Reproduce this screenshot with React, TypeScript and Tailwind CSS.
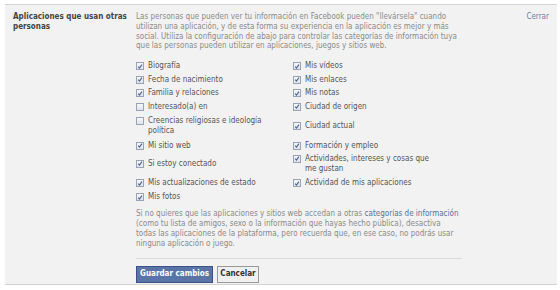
import React from 'react';

type Item = { label: string; checked: boolean };

const rows: { h: string; cells: [Item | null, Item | null] }[] = [
  { h: 'h-[13.3px]', cells: [{ label: 'Biografía', checked: true }, { label: 'Mis vídeos', checked: true }] },
  { h: 'h-[13.3px]', cells: [{ label: 'Fecha de nacimiento', checked: true }, { label: 'Mis enlaces', checked: true }] },
  { h: 'h-[13.6px]', cells: [{ label: 'Familia y relaciones', checked: true }, { label: 'Mis notas', checked: true }] },
  { h: 'h-[13.3px]', cells: [{ label: 'Interesado(a) en', checked: false }, { label: 'Ciudad de origen', checked: true }] },
  { h: 'h-[26px]', cells: [{ label: 'Creencias religiosas e ideología política', checked: false }, { label: 'Ciudad actual', checked: true }] },
  { h: 'h-[13.3px]', cells: [{ label: 'Mi sitio web', checked: true }, { label: 'Formación y empleo', checked: true }] },
  { h: 'h-[23px]', cells: [{ label: 'Si estoy conectado', checked: true }, { label: 'Actividades, intereses y cosas que me gustan', checked: true }] },
  { h: 'h-[16px]', cells: [{ label: 'Mis actualizaciones de estado', checked: true }, { label: 'Actividad de mis aplicaciones', checked: true }] },
  { h: 'h-[12px]', cells: [{ label: 'Mis fotos', checked: true }, null] },
];

const Check = ({ checked }: { checked: boolean }) => (
  <span className="mt-[1px] flex h-[8px] w-[8px] shrink-0 items-center justify-center border border-[#9aa3b5] bg-gradient-to-b from-[#f6f7f9] to-[#dfe3ea]">
    {checked && (
      <svg width="7" height="7" viewBox="0 0 8 8">
        <path d="M1.6 4.3 L3.3 6.1 L6.6 1.5" fill="none" stroke="#4a5f8f" strokeWidth="1.4" />
      </svg>
    )}
  </span>
);

const Option = ({ item }: { item: Item | null }) =>
  item ? (
    <label className="flex items-start gap-[4px]">
      <Check checked={item.checked} />
      <span className="w-[130px] leading-[10px] text-[#555]">{item.label}</span>
    </label>
  ) : (
    <div />
  );

export default function App() {
  return (
    <div className="h-[290px] w-[560px] bg-white pl-[5px] pt-[4px] font-['DejaVu_Sans_Condensed','DejaVu_Sans',sans-serif] text-[8px]">
      <div className="flex h-[281px] w-[552px] border-t border-b border-[#d3d3d3] bg-[#f2f2f2]">
        <div className="w-[131px] shrink-0 pl-[8px] pt-[7px] text-[8px] font-bold leading-[10px] text-[#444]">
          Aplicaciones que usan otras personas
        </div>
        <div className="w-[326px] shrink-0 pt-[7px]">
          <p className="leading-[9.8px] text-[#8a8a8a]">
            Las personas que pueden ver tu información en Facebook pueden "llevársela" cuando utilizan una aplicación, y de esta forma su experiencia en la aplicación es mejor y más social. Utiliza la configuración de abajo para controlar las categorías de información tuya que las personas pueden utilizar en aplicaciones, juegos y sitios web.
          </p>
          <div className="mt-[8.5px] grid grid-cols-[157px_1fr]">
            {rows.map((r, i) => (
              <React.Fragment key={i}>
                <div className={`${r.h} flex items-center`}>
                  <Option item={r.cells[0]} />
                </div>
                <div className={`${r.h} flex items-center`}>
                  <Option item={r.cells[1]} />
                </div>
              </React.Fragment>
            ))}
          </div>
          <p className="mt-[6px] leading-[9.8px] text-[#8a8a8a]">
            Si no quieres que las aplicaciones y sitios web accedan a otras{' '}
            <span className="text-[#5a6f9c]">categorías de información</span> (como tu lista de amigos, sexo o la información que hayas hecho pública), desactiva todas las aplicaciones de la plataforma, pero recuerda que, en ese caso, no podrás usar ninguna aplicación o juego.
          </p>
          <div className="mt-[9px] border-t border-[#dcdcdc] pt-[7px]">
            <div className="flex gap-[4px]">
              <button className="h-[17px] w-[77px] border border-[#3c5289] bg-[#5b74a8] text-[8px] font-bold text-white">
                Guardar cambios
              </button>
              <button className="h-[17px] w-[42px] border border-[#999] bg-[#f0f0f0] text-[8px] font-bold text-[#333]">
                Cancelar
              </button>
            </div>
          </div>
        </div>
        <div className="flex-1 pr-[8px] pt-[7px] text-right leading-[10px] text-[#6d7fa8]">Cerrar</div>
      </div>
    </div>
  );
}
